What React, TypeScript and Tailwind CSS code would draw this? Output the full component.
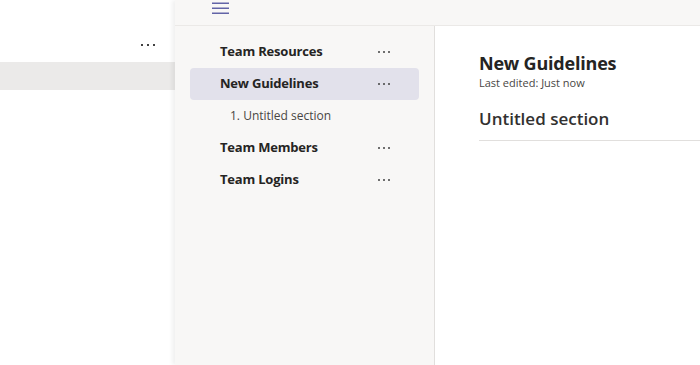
import React from "react";

const font = { fontFamily: '"Open Sans", "Noto Sans", Arial, sans-serif' };

function Dots({ className = "" }: { className?: string }) {
  return (
    <span className={`flex items-center gap-[3px] ${className}`}>
      <span className="h-[2px] w-[2px] rounded-full bg-[#424242]" />
      <span className="h-[2px] w-[2px] rounded-full bg-[#424242]" />
      <span className="h-[2px] w-[2px] rounded-full bg-[#424242]" />
    </span>
  );
}

const pages = [
  { title: "Team Resources" },
  { title: "New Guidelines", selected: true, sections: ["1. Untitled section"] },
  { title: "Team Members" },
  { title: "Team Logins" },
];

export default function App() {
  return (
    <div className="flex h-[365px] w-[700px] overflow-hidden bg-white text-[#252423]" style={font}>
      {/* LEFT PANE */}
      <aside className="w-[175px] shrink-0 bg-white">
        <div className="flex h-[62px] items-end justify-end pb-[16px] pr-[20px]">
          <span className="flex items-center gap-[4px]">
            <span className="h-[2px] w-[2px] bg-[#424242]" />
            <span className="h-[2px] w-[2px] bg-[#424242]" />
            <span className="h-[2px] w-[2px] bg-[#424242]" />
          </span>
        </div>
        <div className="h-[28px] bg-[#ebeae9]" />
      </aside>

      {/* NOTEBOOK */}
      <div className="flex flex-1 flex-col bg-[#f8f7f6] shadow-[-3px_0_4px_rgba(0,0,0,0.06)]">
        <header className="flex h-[26px] shrink-0 items-start border-b border-[#ebe9e7] pl-[37px] pt-[1px]">
          <svg width="18" height="13" viewBox="0 0 18 13" className="mt-[1px]">
            <rect x="0" y="0.5" width="17" height="1.5" fill="#6264a7" />
            <rect x="0" y="5.5" width="17" height="1.5" fill="#6264a7" />
            <rect x="0" y="10.5" width="17" height="1.5" fill="#6264a7" />
          </svg>
        </header>

        <div className="flex flex-1">
          {/* PAGES */}
          <nav className="w-[260px] shrink-0 border-r border-[#e1dfdd] px-[15px] pt-[10px]">
            {pages.map((p) => (
              <div key={p.title}>
                <div
                  className={`flex h-[32px] items-center justify-between rounded-[4px] pl-[30px] pr-[29px] ${
                    p.selected ? "bg-[#e2e1eb]" : ""
                  }`}
                >
                  <span className="text-[13px] font-bold tracking-[-0.2px]">{p.title}</span>
                  <Dots />
                </div>
                {p.sections?.map((s) => (
                  <div key={s} className="flex h-[32px] items-center pl-[40px] text-[12px] text-[#484644]">
                    {s}
                  </div>
                ))}
              </div>
            ))}
          </nav>

          {/* CONTENT */}
          <main className="flex-1 bg-white pl-[44px] pt-[25px]">
            <h1 className="text-[18px] font-bold leading-[24px] tracking-[-0.2px]">New Guidelines</h1>
            <p className="mt-[1px] text-[11px] leading-[14px] text-[#484644]">Last edited: Just now</p>
            <h2 className="mt-[16px] border-b border-[#e1dfdd] pb-[8px] text-[17px] font-semibold leading-[26px] text-[#323130]">
              Untitled section
            </h2>
          </main>
        </div>
      </div>
    </div>
  );
}
